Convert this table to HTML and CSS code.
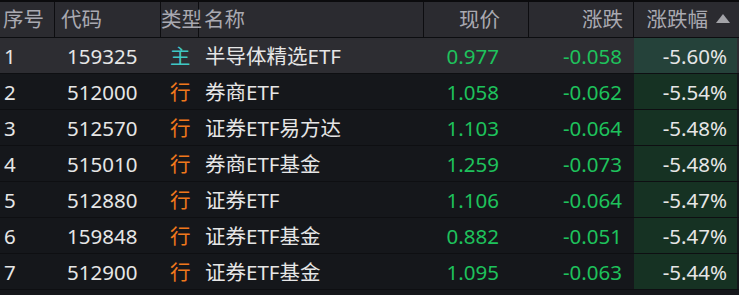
FILE: index.html
```html
<!DOCTYPE html>
<html lang="zh">
<head>
<meta charset="utf-8">
<link rel="stylesheet" href="styles.css">
</head>
<body>
<div class="table">
  <div class="row head">
    <div class="c seq">序号</div>
    <div class="c code">代码</div>
    <div class="c type">类型</div>
    <div class="c name">名称</div>
    <div class="c num price">现价</div>
    <div class="c num chg">涨跌</div>
    <div class="c num pct">涨跌幅<span class="tri"></span></div>
  </div>
  <div class="row sel">
    <div class="c seq">1</div><div class="c code">159325</div><div class="c type main">主</div><div class="c name">半导体精选ETF</div><div class="c num price g">0.977</div><div class="c num chg g">-0.058</div><div class="c num pct">-5.60%</div>
  </div>
  <div class="row">
    <div class="c seq">2</div><div class="c code">512000</div><div class="c type ind">行</div><div class="c name">券商ETF</div><div class="c num price g">1.058</div><div class="c num chg g">-0.062</div><div class="c num pct">-5.54%</div>
  </div>
  <div class="row">
    <div class="c seq">3</div><div class="c code">512570</div><div class="c type ind">行</div><div class="c name">证券ETF易方达</div><div class="c num price g">1.103</div><div class="c num chg g">-0.064</div><div class="c num pct">-5.48%</div>
  </div>
  <div class="row">
    <div class="c seq">4</div><div class="c code">515010</div><div class="c type ind">行</div><div class="c name">券商ETF基金</div><div class="c num price g">1.259</div><div class="c num chg g">-0.073</div><div class="c num pct">-5.48%</div>
  </div>
  <div class="row">
    <div class="c seq">5</div><div class="c code">512880</div><div class="c type ind">行</div><div class="c name">证券ETF</div><div class="c num price g">1.106</div><div class="c num chg g">-0.064</div><div class="c num pct">-5.47%</div>
  </div>
  <div class="row">
    <div class="c seq">6</div><div class="c code">159848</div><div class="c type ind">行</div><div class="c name">证券ETF基金</div><div class="c num price g">0.882</div><div class="c num chg g">-0.051</div><div class="c num pct">-5.47%</div>
  </div>
  <div class="row">
    <div class="c seq">7</div><div class="c code">512900</div><div class="c type ind">行</div><div class="c name">证券ETF基金</div><div class="c num price g">1.095</div><div class="c num chg g">-0.063</div><div class="c num pct">-5.44%</div>
  </div>
</div>
</body>
</html>
```
FILE: styles.css
```css
html, body {
  margin: 0;
  padding: 0;
  background: #15171b;
}
body {
  font-family: "Noto Sans", "Noto Sans CJK SC", sans-serif;
  font-size: 20.5px;
  color: #e6e6e6;
  width: 739px;
  height: 295px;
  overflow: hidden;
}
.table {
  border-top: 2px solid #0b0b0d;
}
.row {
  display: grid;
  grid-template-columns: 55px 106px 38px 225px 105px 105px 103px;
  height: 35px;
  border-bottom: 1px solid #0e0f12;
  background: #15171b;
  padding-right: 2px;
}
.c {
  display: flex;
  align-items: center;
  white-space: nowrap;
  line-height: 1;
  padding-top: 1px;
}
.seq { padding-left: 4px; }
.code { padding-left: 12px; }
.type { padding-left: 9px; }
.name { padding-left: 6px; }
.num { justify-content: flex-end; }
.price { padding-right: 30px; }
.chg { padding-right: 12px; }
.pct { padding-right: 10px; background: #163223; }

.head { background: #2b2b30; height: 35px; border-bottom: 1px solid #0c0d10; }
.head .c { color: #a9a9b1; border-right: 1px solid #0d0d10; padding-top: 0; }
.head .c:last-child { border-right: none; }
.head .seq { padding-left: 3px; }
.head .code { padding-left: 6px; }
.head .type { padding-left: 0; }
.head .name { padding-left: 5px; }
.head .price { padding-right: 28px; }
.head .chg { padding-right: 10px; }
.head .pct { background: #2b2b30; padding-right: 7px; }
.tri {
  width: 0;
  height: 0;
  border-left: 7px solid transparent;
  border-right: 7px solid transparent;
  border-bottom: 9px solid #a3a3a8;
  margin-left: 8px;
  margin-top: -3px;
}

.sel { background: #2d2d32; }
.sel .pct { background: #25423a; }

.g { color: #1ec25c; }
.main { color: #3fc7c4; }
.ind { color: #f0781c; }
```
